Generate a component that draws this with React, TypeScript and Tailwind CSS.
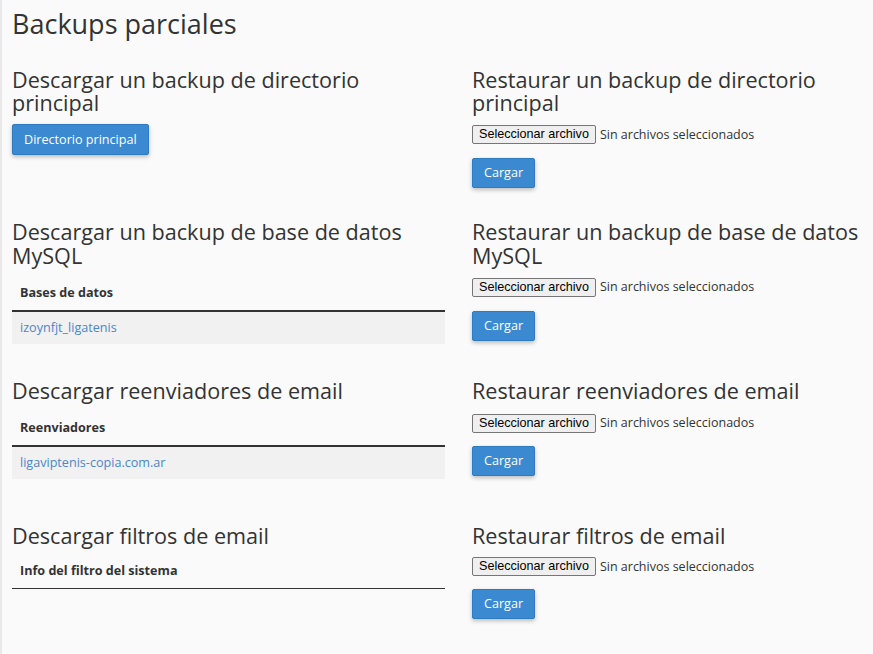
import React from "react";

const sans = "font-['Open_Sans','Liberation_Sans',sans-serif]";

function FileRow({ className = "" }: { className?: string }) {
  return (
    <div className={`flex items-center ${className}`}>
      <button
        type="button"
        className="box-border h-[19px] rounded-[2px] border border-[#767676] bg-[#efefef] px-[6px] font-['Liberation_Sans',Arial,sans-serif] text-[12.6px] leading-[17px] text-black"
      >
        Seleccionar archivo
      </button>
      <span className="ml-[4px] text-[12.5px] leading-[18px] text-[#333]">
        Sin archivos seleccionados
      </span>
    </div>
  );
}

function BlueButton({ label, className = "" }: { label: string; className?: string }) {
  return (
    <button
      type="button"
      className={`block h-[30px] rounded-[2px] border border-[#2f7bc1] bg-[#3a89d1] px-[11px] text-[12.6px] leading-[18px] text-white shadow-[0_2px_4px_rgba(0,0,0,0.25)] ${className}`}
    >
      {label}
    </button>
  );
}

function Heading({ children }: { children: React.ReactNode }) {
  return <h2 className="text-[21.6px] leading-[23.76px] font-normal text-[#333]">{children}</h2>;
}

function Restore({ title, fileMt = "mt-[10px]", btnMt = "mt-[14px]" }: { title: React.ReactNode; fileMt?: string; btnMt?: string }) {
  return (
    <div>
      <Heading>{title}</Heading>
      <FileRow className={fileMt} />
      <BlueButton label="Cargar" className={btnMt} />
    </div>
  );
}

function ListTable({ head, rows, thick = true, mt = "mt-[8px]" }: { head: string; rows: string[]; thick?: boolean; mt?: string }) {
  return (
    <table className={`w-full border-collapse ${mt}`}>
      <thead>
        <tr>
          <th
            className={`px-[8px] py-[8px] text-left text-[12.6px] leading-[18px] font-bold text-[#333] ${
              thick ? "border-b-2 border-[#333]" : "border-b border-[#333]"
            }`}
          >
            {head}
          </th>
        </tr>
      </thead>
      <tbody>
        {rows.map((r) => (
          <tr key={r} className="bg-[#f1f1f1]">
            <td className="px-[8px] py-[7px] text-[12.6px] leading-[18px]">
              <a href="#" className="text-[#4a86cc]">
                {r}
              </a>
            </td>
          </tr>
        ))}
      </tbody>
    </table>
  );
}

export default function App() {
  return (
    <div className={`min-h-screen border-l-2 border-[#e9e9e9] bg-[#fafafa] pl-[10px] text-[#333] ${sans}`}>
      <h1 className="pt-[9px] text-[27px] leading-[29.7px] font-normal">Backups parciales</h1>

      <div className="mt-[29px] grid grid-cols-[433px_1fr] gap-x-[27px]">
        <div>
          <Heading>Descargar un backup de directorio principal</Heading>
          <BlueButton label="Directorio principal" className="mt-[9px] h-[31px]" />
        </div>
        <Restore title="Restaurar un backup de directorio principal" />
      </div>

      <div className="mt-[32px] grid grid-cols-[433px_1fr] gap-x-[27px]">
        <div>
          <Heading>Descargar un backup de base de datos MySQL</Heading>
          <ListTable head="Bases de datos" rows={["izoynfjt_ligatenis"]} />
        </div>
        <Restore title="Restaurar un backup de base de datos MySQL" />
      </div>

      <div className="mt-[35px] grid grid-cols-[433px_1fr] gap-x-[27px]">
        <div>
          <Heading>Descargar reenviadores de email</Heading>
          <ListTable head="Reenviadores" rows={["ligaviptenis-copia.com.ar"]} />
        </div>
        <Restore title="Restaurar reenviadores de email" fileMt="mt-[11px]" btnMt="mt-[13px]" />
      </div>

      <div className="mt-[45px] grid grid-cols-[433px_1fr] gap-x-[27px]">
        <div>
          <Heading>Descargar filtros de email</Heading>
          <ListTable head="Info del filtro del sistema" rows={[]} thick={false} mt="mt-[7px]" />
        </div>
        <Restore title="Restaurar filtros de email" btnMt="mt-[13px]" />
      </div>
    </div>
  );
}
